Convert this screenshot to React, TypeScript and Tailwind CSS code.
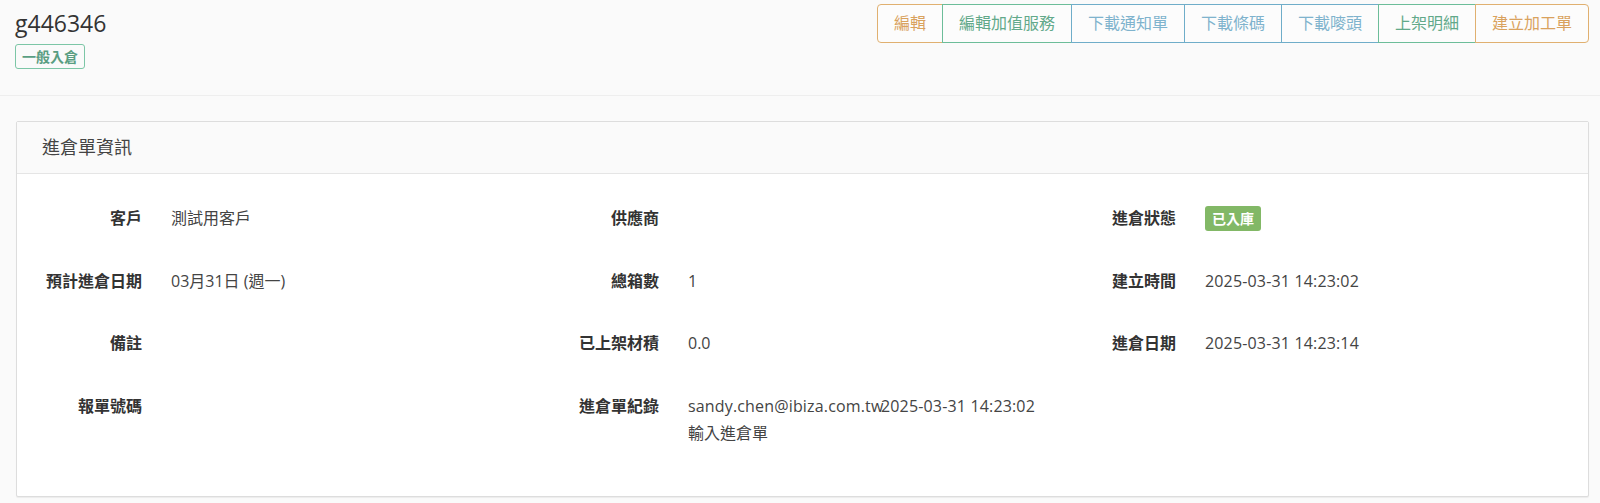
import React from 'react';

const font = { fontFamily: '"Open Sans", "Noto Sans CJK TC", sans-serif' };

type Tone = 'orange' | 'green' | 'blue';

const toneClass: Record<Tone, string> = {
  orange: 'border-[#e0b070] text-[#d9a25e]',
  green: 'border-[#6cbd99] text-[#62a98a]',
  blue: 'border-[#6fadc9] text-[#7fb3cd]',
};

const actions: { label: string; tone: Tone }[] = [
  { label: '編輯', tone: 'orange' },
  { label: '編輯加值服務', tone: 'green' },
  { label: '下載通知單', tone: 'blue' },
  { label: '下載條碼', tone: 'blue' },
  { label: '下載嘜頭', tone: 'blue' },
  { label: '上架明細', tone: 'green' },
  { label: '建立加工單', tone: 'orange' },
];

const Field = ({ label, children }: { label: string; children?: React.ReactNode }) => (
  <div className="flex items-start gap-[29px] mb-[36.5px] leading-[26px]">
    <div className="w-[115px] shrink-0 text-right font-bold text-[#333]">{label}</div>
    <div className="text-[#444]">{children}</div>
  </div>
);

export default function App() {
  return (
    <div className="min-h-[503px] bg-[#fafafa] text-[16px]" style={font}>
      {/* page header */}
      <div className="flex justify-between h-[96px] border-b border-[#eeeeee] pl-[15px] pr-[11px]">
        <div className="pt-[7px]">
          <h1 className="text-[23px] leading-[32px] text-[#333]">g446346</h1>
          <span className="inline-block mt-[5px] h-[25px] px-[6px] leading-[23px] text-[14px] font-bold text-[#5a9e82] border border-[#7cc6a6] rounded-[3px]">
            一般入倉
          </span>
        </div>
        <div className="flex items-start pt-[4px]">
          {actions.map((a, i) => (
            <button
              key={a.label}
              className={`relative h-[39px] px-[16px] bg-[#fcfcfc] border leading-[37px] ${toneClass[a.tone]} ${
                i === 0 ? 'rounded-l-[4px]' : '-ml-px'
              } ${i === actions.length - 1 ? 'rounded-r-[4px]' : ''}`}
            >
              {a.label}
            </button>
          ))}
        </div>
      </div>

      {/* card */}
      <div className="ml-[16px] mr-[11px] mt-[25px] bg-white border border-[#dddddd] rounded-[2px] shadow-[0_1px_1px_rgba(0,0,0,0.06)]">
        <div className="h-[52px] flex items-center pl-[25px] bg-[#fafafa] border-b border-[#e5e5e5] text-[18px] text-[#444]">
          進倉單資訊
        </div>
        <div className="grid grid-cols-3 px-[10px] pt-[31px] pb-[13px]">
          <div>
            <Field label="客戶">測試用客戶</Field>
            <Field label="預計進倉日期">03月31日 (週一)</Field>
            <Field label="備註" />
            <Field label="報單號碼" />
          </div>
          <div>
            <Field label="供應商" />
            <Field label="總箱數">1</Field>
            <Field label="已上架材積">0.0</Field>
            <Field label="進倉單紀錄">
              <div className="whitespace-nowrap">
                <span className="inline-block w-[193px] tracking-[0.01em]">sandy.chen@ibiza.com.tw</span>
                <span className="tracking-[0.01em]">2025-03-31 14:23:02</span>
              </div>
              <div className="leading-[28px]">輸入進倉單</div>
            </Field>
          </div>
          <div>
            <Field label="進倉狀態">
              <span className="inline-block h-[25px] px-[7px] leading-[25px] text-[14px] font-bold text-white bg-[#82b866] rounded-[3px]">
                已入庫
              </span>
            </Field>
            <Field label="建立時間">
              <span className="tracking-[0.01em]">2025-03-31 14:23:02</span>
            </Field>
            <Field label="進倉日期">
              <span className="tracking-[0.01em]">2025-03-31 14:23:14</span>
            </Field>
          </div>
        </div>
      </div>
    </div>
  );
}
